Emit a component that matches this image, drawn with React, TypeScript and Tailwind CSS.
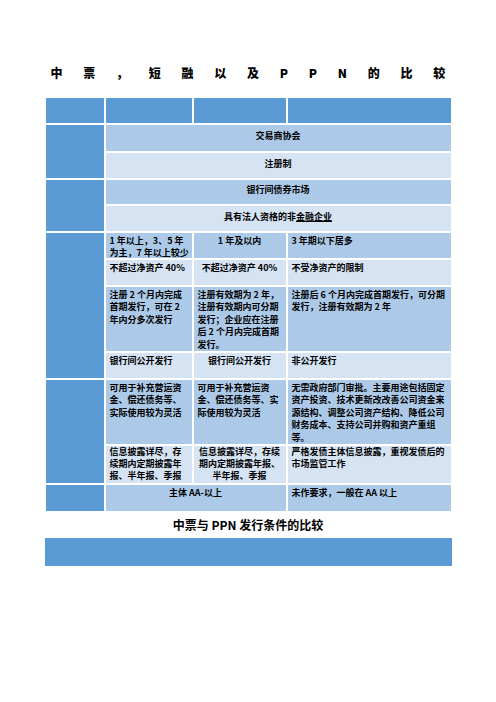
import React from 'react';

const MID = 'bg-[#accae8]';
const LIGHT = 'bg-[#d5e3f3]';
const DARK = 'bg-[#5b9bd5]';

type CellProps = {
  tone: string;
  col: string;
  row: string;
  center?: boolean;
  tight?: boolean;
  children?: React.ReactNode;
};

function Cell({ tone, col, row, center, tight, children }: CellProps) {
  return (
    <div
      className={`${tone} ${col} ${row} px-[4px] whitespace-nowrap overflow-hidden ${
        tight ? 'pt-0 leading-[12px]' : 'pt-[1.5px] leading-[12.6px]'
      } ${center ? 'text-center' : 'text-left'}`}
    >
      {children}
    </div>
  );
}

const titleChars = ['中', '票', '，', '短', '融', '以', '及', 'P', 'P', 'N', '的', '比', '较'];

export default function App() {
  return (
    <div
      className="w-[496px] h-[702px] bg-white text-black"
      style={{ fontFamily: '"Noto Sans CJK SC", "Noto Sans", sans-serif' }}
    >
      <div className="mx-auto w-[405px] pt-[65px]">
        <div className="flex justify-between px-[5px] text-[12px] leading-[16px] font-black">
          {titleChars.map((c, i) => (
            <span key={i}>{c}</span>
          ))}
        </div>

        <div className="mt-[17px] grid grid-cols-[58px_86px_92px_163px] grid-rows-[25px_26px_25px_24px_25px_25px_25px_64px_25px_64px_37px_26px] gap-[2px] text-[9px] font-bold">
          {/* header */}
          <div className={`${DARK} col-start-1 row-start-1`} />
          <div className={`${DARK} col-start-2 row-start-1`} />
          <div className={`${DARK} col-start-3 row-start-1`} />
          <div className={`${DARK} col-start-4 row-start-1`} />

          {/* left column groups */}
          <div className={`${DARK} col-start-1 row-start-2 row-span-2`} />
          <div className={`${DARK} col-start-1 row-start-4 row-span-2`} />
          <div className={`${DARK} col-start-1 row-start-6 row-span-4`} />
          <div className={`${DARK} col-start-1 row-start-10 row-span-2`} />
          <div className={`${DARK} col-start-1 row-start-12`} />

          <Cell tone={MID} col="col-start-2 col-span-3" row="row-start-2" center>
            <div className="pt-[3px]">交易商协会</div>
          </Cell>
          <Cell tone={LIGHT} col="col-start-2 col-span-3" row="row-start-3" center>
            <div className="pt-[3px]">注册制</div>
          </Cell>
          <Cell tone={MID} col="col-start-2 col-span-3" row="row-start-4" center>
            <div className="pt-[2px]">银行间债券市场</div>
          </Cell>
          <Cell tone={LIGHT} col="col-start-2 col-span-3" row="row-start-5" center>
            <div className="pt-[3px]">
              具有法人资格的非<span className="underline">金融企业</span>
            </div>
          </Cell>

          {/* 期限 */}
          <Cell tone={MID} col="col-start-2" row="row-start-6" tight>
            <div className="pt-[2px]">
              1 年以上，3、5 年
              <br />
              为主，7 年以上较少
            </div>
          </Cell>
          <Cell tone={MID} col="col-start-3" row="row-start-6" center>
            1 年及以内
          </Cell>
          <Cell tone={MID} col="col-start-4" row="row-start-6">
            3 年期以下居多
          </Cell>

          {/* 规模 */}
          <Cell tone={LIGHT} col="col-start-2" row="row-start-7">
            不超过净资产 40%
          </Cell>
          <Cell tone={LIGHT} col="col-start-3" row="row-start-7" center>
            不超过净资产 40%
          </Cell>
          <Cell tone={LIGHT} col="col-start-4" row="row-start-7">
            不受净资产的限制
          </Cell>

          {/* 发行 */}
          <Cell tone={MID} col="col-start-2" row="row-start-8">
            注册 2 个月内完成
            <br />
            首期发行，可在 2
            <br />
            年内分多次发行
          </Cell>
          <Cell tone={MID} col="col-start-3" row="row-start-8">
            注册有效期为 2 年，
            <br />
            注册有效期内可分期
            <br />
            发行；企业应在注册
            <br />
            后 2 个月内完成首期
            <br />
            发行。
          </Cell>
          <Cell tone={MID} col="col-start-4" row="row-start-8">
            注册后 6 个月内完成首期发行，可分期
            <br />
            发行，注册有效期为 2 年
          </Cell>

          {/* 发行方式 */}
          <Cell tone={LIGHT} col="col-start-2" row="row-start-9">
            银行间公开发行
          </Cell>
          <Cell tone={LIGHT} col="col-start-3" row="row-start-9" center>
            银行间公开发行
          </Cell>
          <Cell tone={LIGHT} col="col-start-4" row="row-start-9">
            非公开发行
          </Cell>

          {/* 用途 */}
          <Cell tone={MID} col="col-start-2" row="row-start-10">
            可用于补充营运资
            <br />
            金、偿还债务等、
            <br />
            实际使用较为灵活
          </Cell>
          <Cell tone={MID} col="col-start-3" row="row-start-10">
            可用于补充营运资
            <br />
            金、偿还债务等、实
            <br />
            际使用较为灵活
          </Cell>
          <Cell tone={MID} col="col-start-4" row="row-start-10">
            无需政府部门审批。主要用途包括固定
            <br />
            资产投资、技术更新改改善公司资金来
            <br />
            源结构、调整公司资产结构、降低公司
            <br />
            财务成本、支持公司并购和资产重组
            <br />
            等。
          </Cell>

          {/* 信息披露 */}
          <Cell tone={LIGHT} col="col-start-2" row="row-start-11" tight>
            信息披露详尽，存
            <br />
            续期内定期披露年
            <br />
            报、半年报、季报
          </Cell>
          <Cell tone={LIGHT} col="col-start-3" row="row-start-11" center tight>
            信息披露详尽，存续
            <br />
            期内定期披露年报、
            <br />
            半年报、季报
          </Cell>
          <Cell tone={LIGHT} col="col-start-4" row="row-start-11" tight>
            严格发债主体信息披露，重视发债后的
            <br />
            市场监管工作
          </Cell>

          {/* 评级 */}
          <Cell tone={MID} col="col-start-2 col-span-2" row="row-start-12" center>
            主体 AA-以上
          </Cell>
          <Cell tone={MID} col="col-start-4" row="row-start-12">
            未作要求，一般在 AA 以上
          </Cell>
        </div>

        <div className="mt-[6px] text-center text-[12px] leading-[16px] font-bold">
          中票与 PPN 发行条件的比较
        </div>
      </div>

      <div className={`mx-auto mt-[5px] h-[28px] w-[407px] ${DARK}`} />
    </div>
  );
}
